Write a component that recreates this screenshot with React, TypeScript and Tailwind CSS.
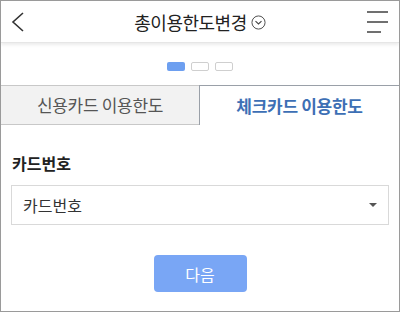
import React from "react";

export default function App() {
  return (
    <div
      className="w-[400px] h-[312px] bg-white border border-[#9a9a9a] overflow-hidden flex flex-col"
      style={{ fontFamily: '"Noto Sans CJK KR", "Noto Sans", sans-serif' }}
    >
      {/* header */}
      <div className="h-[42px] flex items-center justify-between px-[8px] relative shrink-0 border-b border-[#e6e6e6] shadow-[0_2px_3px_rgba(0,0,0,0.08)]">
        <svg width="16" height="22" viewBox="0 0 16 22" className="ml-[1px]">
          <path d="M13 2 L3 11 L13 20" fill="none" stroke="#333" strokeWidth="1.6" />
        </svg>
        <div className="absolute left-0 right-0 top-0 h-[42px] flex items-center justify-center pointer-events-none">
          <span className="text-[18px] text-[#222] tracking-[-0.5px] leading-none">총이용한도변경</span>
          <svg width="15" height="15" viewBox="0 0 16 16" className="ml-[4px] mt-[1px]">
            <circle cx="8" cy="8" r="7" fill="none" stroke="#444" strokeWidth="1" />
            <path d="M4.8 6.6 L8 9.6 L11.2 6.6" fill="none" stroke="#444" strokeWidth="1.2" />
          </svg>
        </div>
        <svg width="24" height="24" viewBox="0 0 24 24" className="mr-[1px] mt-[1px]">
          <line x1="1" y1="2" x2="22" y2="2" stroke="#333" strokeWidth="1.4" />
          <line x1="1" y1="12" x2="22" y2="12" stroke="#333" strokeWidth="1.4" />
          <line x1="1" y1="22" x2="15" y2="22" stroke="#333" strokeWidth="1.4" />
        </svg>
      </div>

      {/* dots */}
      <div className="h-[42px] flex items-center justify-center gap-[6px] pt-[4px] shrink-0">
        <div className="w-[18px] h-[9px] rounded-[2px] bg-[#6d9ff0]" />
        <div className="w-[18px] h-[9px] rounded-[2px] border border-[#cfcfcf] bg-white" />
        <div className="w-[18px] h-[9px] rounded-[2px] border border-[#cfcfcf] bg-white" />
      </div>

      {/* tabs */}
      <div className="flex h-[40px] shrink-0">
        <div className="w-[198px] bg-[#f2f2f2] border-t border-b border-[#c8c8c8] flex items-center justify-center text-[17px] text-[#555] tracking-[-0.3px]">
          신용카드 이용한도
        </div>
        <div className="flex-1 border-t border-l border-[#9aa0a8] flex items-center justify-center text-[17px] font-bold text-[#3d6fb5] tracking-[-0.3px]">
          체크카드 이용한도
        </div>
      </div>

      {/* form */}
      <div className="px-[10px] pt-[30px]">
        <div className="text-[16px] font-bold text-[#222] leading-none pl-[1px]">카드번호</div>
        <div className="mt-[14px] h-[40px] border border-[#d9d9d9] flex items-center justify-between pl-[11px] pr-[10px]">
          <span className="text-[16px] text-[#333]">카드번호</span>
          <svg width="10" height="6" viewBox="0 0 10 6">
            <path d="M1 1 L9 1 L5 5 Z" fill="#555" />
          </svg>
        </div>
        <div className="flex justify-center mt-[30px]">
          <div className="w-[93px] h-[37px] rounded-[4px] bg-[#79a6f5] flex items-center justify-center text-white text-[16px]">
            다음
          </div>
        </div>
      </div>
    </div>
  );
}
